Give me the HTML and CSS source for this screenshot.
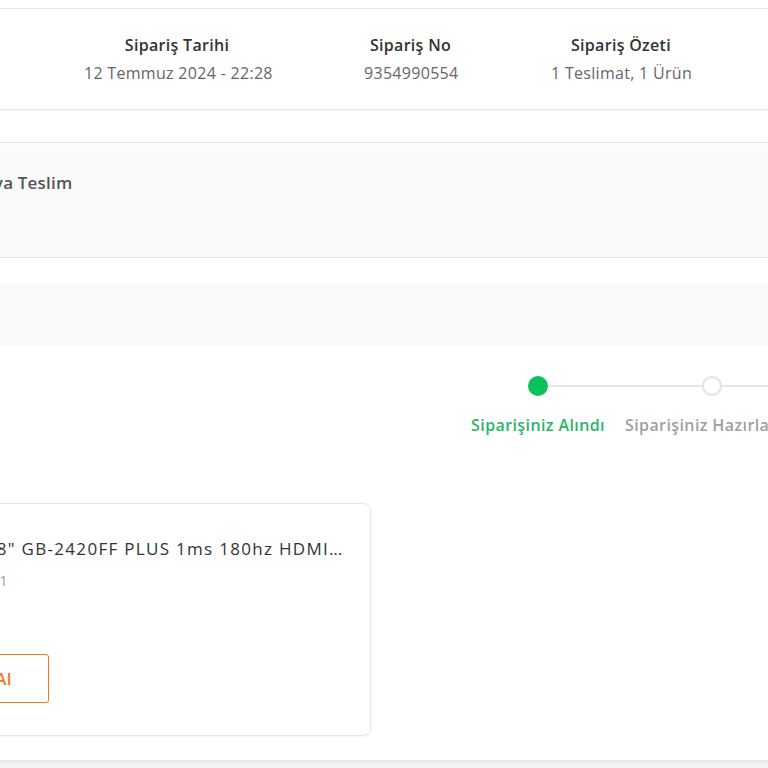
FILE: index.html
```html
<!DOCTYPE html>
<html>
<head>
    <title>Sipariş Detayı</title>
    <link rel="stylesheet" href="styles.css">
</head>
<body>
<div class="page">
    <div class="ozet">
        <div class="ozet-kolon kolon-tarih">
            <p class="ozet-baslik">Sipariş Tarihi</p>
            <p class="ozet-deger">12 Temmuz 2024 - 22:28</p>
        </div>
        <div class="ozet-kolon kolon-no">
            <p class="ozet-baslik">Sipariş No</p>
            <p class="ozet-deger">9354990554</p>
        </div>
        <div class="ozet-kolon kolon-detay">
            <p class="ozet-baslik">Sipariş Özeti</p>
            <p class="ozet-deger">1 Teslimat, 1 Ürün</p>
        </div>
    </div>

    <div class="teslimat">
        <p class="teslimat-baslik">Kargoya Teslim</p>
    </div>

    <div class="bant"></div>

    <div class="durum">
        <div class="durum-cizgi">
            <span class="nokta nokta-aktif"></span>
            <span class="cizgi"></span>
            <span class="nokta"></span>
            <span class="cizgi"></span>
            <span class="nokta"></span>
        </div>
        <div class="durum-yazilar">
            <span class="durum-yazi aktif">Siparişiniz Alındı</span>
            <span class="durum-yazi">Siparişiniz Hazırlanıyor</span>
            <span class="durum-yazi">Kargoya Verildi</span>
        </div>
    </div>

    <div class="urun-kart">
        <div class="urun-ust">
            <div class="urun-resim"></div>
            <div class="urun-bilgi">
                <p class="urun-ad">23.8" GB-2420FF PLUS 1ms 180hz HDMI DP Freesync Gaming Monitör</p>
                <p class="urun-adet">Adet: 1</p>
            </div>
        </div>
        <button class="tekrar-al">Tekrar Satın Al</button>
    </div>
</div>
</body>
</html>
```

FILE: styles.css
```css
* {
    margin: 0;
    padding: 0;
    box-sizing: border-box;
}
body {
    font-family: "Open Sans", "Noto Sans", sans-serif;
    background-color: #f4f4f4;
    overflow: hidden;
    height: 768px;
}
.page {
    width: 1200px;
    margin-left: -200px;
    background-color: #fff;
    padding-top: 8px;
    padding-bottom: 24px;
    box-shadow: 0 2px 4px rgba(0, 0, 0, 0.08);
}

/* ust ozet kutusu */
.ozet {
    display: flex;
    gap: 94px;
    align-items: center;
    height: 102px;
    padding-left: 283px;
    border: 1px solid #e6e6e6;
    box-shadow: 0 1px 2px rgba(0, 0, 0, 0.04);
}
.ozet-kolon {
    text-align: center;
    white-space: nowrap;
}
.kolon-tarih { width: 186px; }
.kolon-no { width: 93px; }
.kolon-detay { width: 140px; }
.ozet-baslik {
    font-size: 16px;
    font-weight: 600;
    color: #333;
    line-height: 20px;
    letter-spacing: 0.3px;
}
.ozet-deger {
    font-size: 16px;
    color: #666;
    line-height: 20px;
    margin-top: 8px;
    letter-spacing: 0.3px;
}

.teslimat {
    margin-top: 32px;
    height: 116px;
    background-color: #fafafa;
    border-top: 1px solid #e3e3e3;
    border-bottom: 1px solid #e3e3e3;
    box-shadow: inset 0 6px 0 #fcfcfc;
    padding: 30px 0 0 145px;
}
.teslimat-baslik {
    font-size: 17px;
    font-weight: 600;
    color: #555;
    line-height: 20px;
    letter-spacing: 0.2px;
}

.bant {
    margin-top: 26px;
    height: 62px;
    background-color: #fafafa;
    box-shadow: 0 0 3px rgba(0, 0, 0, 0.02);
}

/* siparis durumu */
.durum {
    margin-top: 30px;
    padding-left: 651px;
}
.durum-cizgi {
    display: flex;
    align-items: center;
    padding-left: 77px;
}
.nokta {
    width: 20px;
    height: 20px;
    border-radius: 50%;
    border: 2px solid #e2e2e2;
    background-color: #fff;
    flex-shrink: 0;
}
.nokta-aktif {
    background-color: #0bc15c;
    border-color: #0bc15c;
}
.cizgi {
    width: 154px;
    height: 2px;
    background-color: #e6e6e6;
    flex-shrink: 0;
}
.durum-yazilar {
    display: flex;
    margin-top: 19px;
}
.durum-yazi {
    width: 174px;
    text-align: center;
    font-size: 16px;
    font-weight: 600;
    color: #a0a0a0;
    line-height: 20px;
    white-space: nowrap;
    letter-spacing: 0.4px;
}
.durum-yazi.aktif {
    color: #2db46a;
}

/* urun karti */
.urun-kart {
    margin: 68px 0 0 25px;
    width: 546px;
    border: 1px solid #e6e6e6;
    border-radius: 8px;
    box-shadow: 0 1px 3px rgba(0, 0, 0, 0.05);
    padding: 24px 24px 32px;
}
.urun-ust {
    display: flex;
    gap: 12px;
}
.urun-resim {
    width: 100px;
    height: 102px;
    flex-shrink: 0;
    background-color: #f7f7f7;
}
.urun-bilgi {
    min-width: 0;
    padding-top: 10px;
}
.urun-ad {
    font-size: 17px;
    color: #333;
    line-height: 22px;
    letter-spacing: 1.3px;
    padding-left: 7px;
    white-space: nowrap;
    overflow: hidden;
    text-overflow: ellipsis;
}
.urun-adet {
    font-size: 14px;
    color: #999;
    line-height: 20px;
    margin-top: 11px;
}
.tekrar-al {
    margin-top: 24px;
    width: 199px;
    height: 49px;
    background-color: #fff;
    border: 1px solid #f27a1a;
    border-radius: 3px;
    color: #f27a1a;
    font-family: "Open Sans", sans-serif;
    font-size: 17px;
    font-weight: 600;
    letter-spacing: 0.3px;
}
```
